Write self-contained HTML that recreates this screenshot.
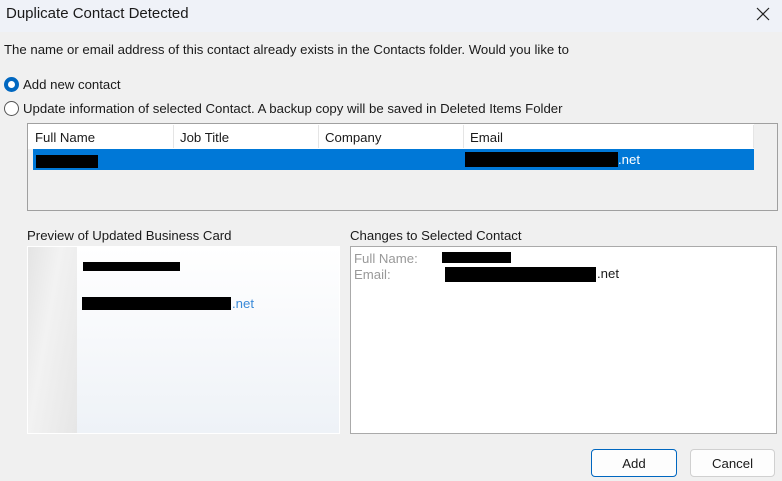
<!DOCTYPE html>
<html><head><style>
*{margin:0;padding:0;box-sizing:border-box}
body{width:782px;height:481px;background:#f0f0f0;font-family:"Liberation Sans",sans-serif;font-size:13.2px;color:#1a1a1a;position:relative;overflow:hidden}
.a{position:absolute;white-space:nowrap}
.blk{position:absolute;background:#000}
</style></head><body>
<div class="a" style="left:0;top:0;width:782px;height:32px;background:#eff2f8"></div>
<div class="a" style="left:6px;top:5px;font-size:15px">Duplicate Contact Detected</div>
<svg class="a" style="left:756px;top:7px" width="14" height="14"><path d="M1 1L13 13M13 1L1 13" stroke="#222" stroke-width="1.2"/></svg>
<div class="a" style="left:4px;top:42px">The name or email address of this contact already exists in the Contacts folder. Would you like to</div>
<div class="a" style="left:4px;top:77px;width:15px;height:15px;border-radius:50%;background:#0067c0"></div>
<div class="a" style="left:8px;top:81px;width:7px;height:7px;border-radius:50%;background:#fff"></div>
<div class="a" style="left:23px;top:77px">Add new contact</div>
<div class="a" style="left:4px;top:101px;width:15px;height:15px;border-radius:50%;border:1px solid #555;background:#fff"></div>
<div class="a" style="left:23px;top:101px">Update information of selected Contact. A backup copy will be saved in Deleted Items Folder</div>
<div class="a" style="left:27px;top:123px;width:751px;height:88px;border:1px solid #a0a0a0;background:#f0f0f0"></div>
<div class="a" style="left:28px;top:124px;width:726px;height:25px;background:#fff"></div>
<div class="a" style="left:173px;top:125px;width:1px;height:23px;background:#e5e5e5"></div>
<div class="a" style="left:318px;top:125px;width:1px;height:23px;background:#e5e5e5"></div>
<div class="a" style="left:463px;top:125px;width:1px;height:23px;background:#e5e5e5"></div>
<div class="a" style="left:753px;top:125px;width:1px;height:23px;background:#e5e5e5"></div>
<div class="a" style="left:35px;top:130px">Full Name</div>
<div class="a" style="left:180px;top:130px">Job Title</div>
<div class="a" style="left:325px;top:130px">Company</div>
<div class="a" style="left:470px;top:130px">Email</div>
<div class="a" style="left:33px;top:149px;width:721px;height:21px;background:#0078d7"></div>
<div class="blk" style="left:36px;top:155px;width:62px;height:13px"></div>
<div class="blk" style="left:465px;top:152px;width:153px;height:15px"></div>
<div class="a" style="left:618px;top:152px;color:#fff">.net</div>
<div class="a" style="left:27px;top:228px">Preview of Updated Business Card</div>
<div class="a" style="left:27px;top:246px;width:313px;height:188px;border:1px solid #fff;background:linear-gradient(#fff,#eef2f7)"></div>
<div class="a" style="left:28px;top:247px;width:49px;height:186px;background:linear-gradient(100deg,#e4e4e4,#f2f2f2 40%,#e6e6e6)"></div>
<div class="blk" style="left:83px;top:262px;width:97px;height:9px"></div>
<div class="blk" style="left:82px;top:297px;width:149px;height:13px"></div>
<div class="a" style="left:232px;top:296px;color:#3a8ad8">.net</div>
<div class="a" style="left:350px;top:228px">Changes to Selected Contact</div>
<div class="a" style="left:350px;top:246px;width:427px;height:188px;border:1px solid #aaa;background:#fff"></div>
<div class="a" style="left:354px;top:251px;color:#999">Full Name:</div>
<div class="a" style="left:354px;top:267px;color:#999">Email:</div>
<div class="blk" style="left:442px;top:252px;width:69px;height:11px"></div>
<div class="blk" style="left:445px;top:267px;width:151px;height:15px"></div>
<div class="a" style="left:597px;top:266px">.net</div>
<div class="a" style="left:591px;top:449px;width:86px;height:28px;border:1px solid #0067c0;border-radius:4px;background:#fdfdfd;text-align:center;line-height:27px">Add</div>
<div class="a" style="left:690px;top:449px;width:85px;height:28px;border:1px solid #d0d0d0;border-radius:4px;background:#fdfdfd;text-align:center;line-height:27px">Cancel</div>
</body></html>
